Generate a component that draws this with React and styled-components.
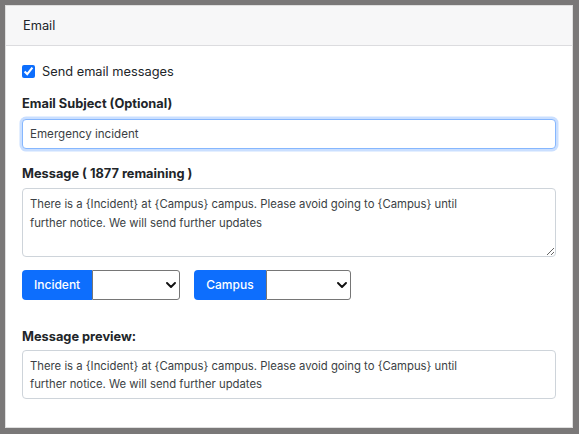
import styled, { createGlobalStyle } from "styled-components";

const GlobalStyle = createGlobalStyle`
  html, body {
    margin: 0;
    padding: 0;
    background: #7a7878;
  }
  body {
    font-family: Inter, "Noto Sans", sans-serif;
    font-size: 12.8px;
    line-height: 1.5;
    color: #212529;
  }
  * { box-sizing: border-box; }
`;

const chevron =
  "url(\"data:image/svg+xml,%3csvg xmlns='http://www.w3.org/2000/svg' viewBox='0 0 10 6'%3e%3cpath fill='none' stroke='%23111' stroke-linecap='round' stroke-linejoin='round' stroke-width='1.9' d='M1 1l4 4 4-4'/%3e%3c/svg%3e\")";

const Page = styled.div`
  width: 579px;
  height: 434px;
  padding: 5px 6px 6px 5px;
`;

const Card = styled.div`
  height: 100%;
  background: #fff;
  border: 1px solid rgba(0, 0, 0, 0.125);
  display: flex;
  flex-direction: column;
`;

const Header = styled.div`
  height: 40px;
  padding: 0 17px;
  display: flex;
  align-items: center;
  background: #f7f7f8;
  border-bottom: 1px solid #dcdcdf;
`;

const Body = styled.div`
  padding: 16px 16px 0;
`;

const CheckRow = styled.label`
  display: flex;
  align-items: center;
  gap: 7px;
  margin-bottom: 13px;
`;

const Check = styled.input`
  width: 13px;
  height: 13px;
  margin: 0;
  accent-color: #0d6efd;
`;

const Label = styled.div`
  font-weight: 700;
  margin-bottom: ${(p) => p.$mb ?? 5.4}px;
`;

const Field = styled.div`
  margin-bottom: ${(p) => p.$gap ?? 15}px;
`;

const TextInput = styled.input`
  display: block;
  width: 100%;
  height: 30px;
  padding: 0 7px;
  font: inherit;
  font-size: 11.6px;
  color: #3b3f44;
  border: 1px solid #86b7fe;
  border-radius: 4px;
  box-shadow: 0 0 0 2.5px rgba(13, 110, 253, 0.22);
  outline: none;
`;

const TextArea = styled.textarea`
  display: block;
  width: 100%;
  height: 69px;
  padding: 6px 7px;
  font: inherit;
  font-size: 11.3px;
  line-height: 18.5px;
  color: #3b3f44;
  border: 1px solid #ced4da;
  border-radius: 4px;
  resize: vertical;
  outline: none;
`;

const Toolbar = styled.div`
  display: flex;
  gap: 14px;
  margin-bottom: 27px;
`;

const InputGroup = styled.div`
  display: flex;
  height: 30px;
`;

const TagButton = styled.button`
  height: 30px;
  padding: 0 12px;
  font: inherit;
  font-size: 12px;
  font-weight: 500;
  color: #fff;
  background: #0d6efd;
  border: none;
  border-radius: 4px 0 0 4px;
`;

const Select = styled.select`
  appearance: none;
  width: ${(p) => p.$w}px;
  height: 30px;
  border: 1px solid #767676;
  border-radius: 0 3px 3px 0;
  background: #fff ${chevron} no-repeat right 3px center / 10px 6px;
  font: inherit;
  outline: none;
`;

const Preview = styled.div`
  padding: 6px 7px 4px;
  font-size: 11.3px;
  line-height: 18.5px;
  color: #3b3f44;
  border: 1px solid #ced4da;
  border-radius: 4px;
`;

const message =
  "There is a {Incident} at {Campus} campus. Please avoid going to {Campus} until\nfurther notice. We will send further updates";

export default function App() {
  return (
    <>
      <GlobalStyle />
      <Page>
        <Card>
          <Header>Email</Header>
          <Body>
            <CheckRow>
              <Check type="checkbox" defaultChecked />
              Send email messages
            </CheckRow>
            <Field>
              <Label>Email Subject (Optional)</Label>
              <TextInput defaultValue="Emergency incident" />
            </Field>
            <Field $gap={13}>
              <Label>Message ( 1877 remaining )</Label>
              <TextArea defaultValue={message} />
            </Field>
            <Toolbar>
              <InputGroup>
                <TagButton>Incident</TagButton>
                <Select $w={88}>
                  <option></option>
                </Select>
              </InputGroup>
              <InputGroup>
                <TagButton>Campus</TagButton>
                <Select $w={85}>
                  <option></option>
                </Select>
              </InputGroup>
            </Toolbar>
            <Field>
              <Label $mb={3}>Message preview:</Label>
              <Preview>
                There is a {"{Incident}"} at {"{Campus}"} campus. Please avoid going to {"{Campus}"} until
                <br />
                further notice. We will send further updates
              </Preview>
            </Field>
          </Body>
        </Card>
      </Page>
    </>
  );
}
